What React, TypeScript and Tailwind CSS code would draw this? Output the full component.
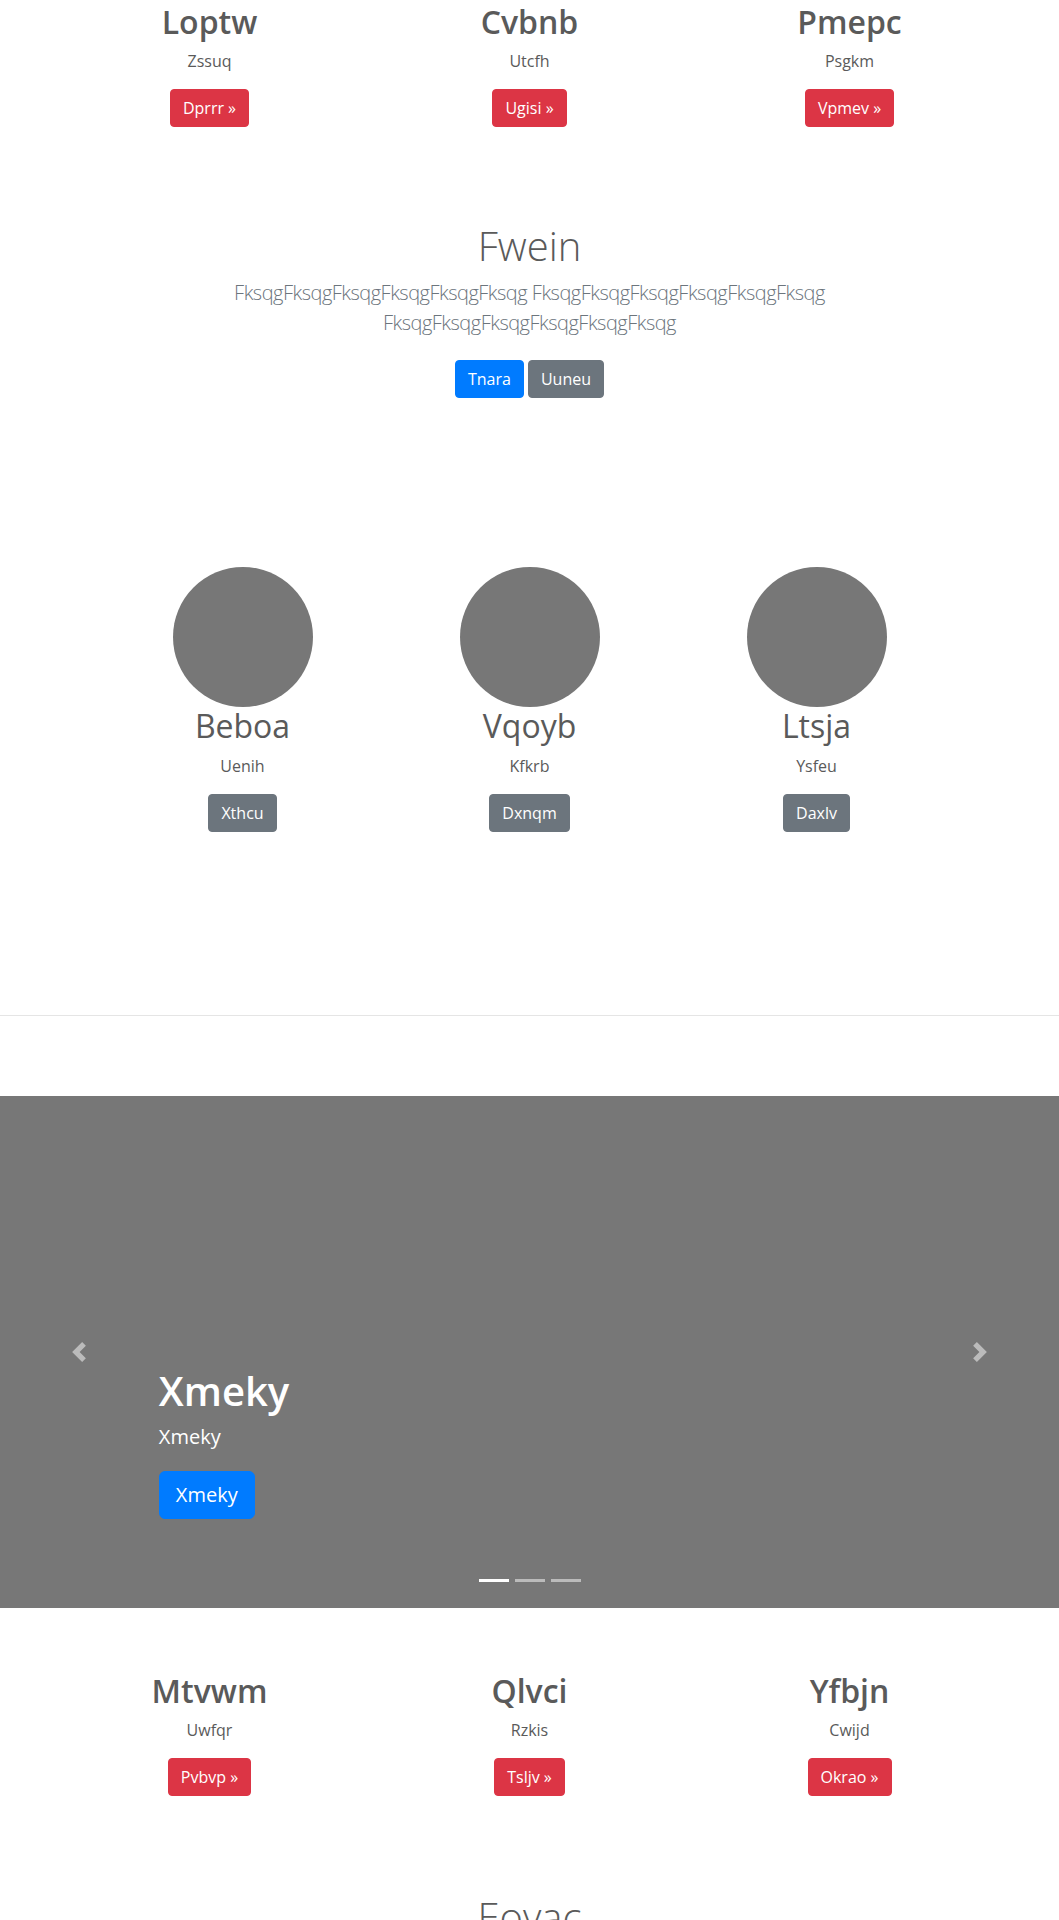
import React from "react";

const topCols = [
  { h: "Loptw", p: "Zssuq", b: "Dprrr »" },
  { h: "Cvbnb", p: "Utcfh", b: "Ugisi »" },
  { h: "Pmepc", p: "Psgkm", b: "Vpmev »" },
];
const bottomCols = [
  { h: "Mtvwm", p: "Uwfqr", b: "Pvbvp »" },
  { h: "Qlvci", p: "Rzkis", b: "Tsljv »" },
  { h: "Yfbjn", p: "Cwijd", b: "Okrao »" },
];
const circles = [
  { h: "Beboa", p: "Uenih", b: "Xthcu" },
  { h: "Vqoyb", p: "Kfkrb", b: "Dxnqm" },
  { h: "Ltsja", p: "Ysfeu", b: "Daxlv" },
];

function RedRow({ cols }: { cols: { h: string; p: string; b: string }[] }) {
  return (
    <div className="mx-auto grid w-[960px] grid-cols-3">
      {cols.map((c) => (
        <div key={c.h} className="flex flex-col items-center text-center">
          <h2 className="mb-2 text-[32px] font-semibold leading-[38.4px]">{c.h}</h2>
          <p className="mb-4 text-base leading-6">{c.p}</p>
          <a className="inline-block rounded border border-[#dc3545] bg-[#dc3545] px-3 py-[6px] text-base leading-6 text-white">
            {c.b}
          </a>
        </div>
      ))}
    </div>
  );
}

function Chevron({ dir }: { dir: "l" | "r" }) {
  return (
    <svg width="20" height="20" viewBox="0 0 8 8" fill="#ffffff" fillOpacity="0.5">
      {dir === "l" ? (
        <path d="M5.25 0l-4 4 4 4 1.5-1.5-2.5-2.5 2.5-2.5-1.5-1.5z" />
      ) : (
        <path d="M2.75 0l-1.5 1.5 2.5 2.5-2.5 2.5 1.5 1.5 4-4-4-4z" />
      )}
    </svg>
  );
}

export default function App() {
  const fks = "FksqgFksqgFksqgFksqgFksqgFksqg";
  return (
    <div className="min-h-[1920px] w-full overflow-hidden bg-white pt-[3px] font-['Open_Sans','Noto_Sans',sans-serif] text-[#5a5a5a]">
      <RedRow cols={topCols} />

      <section className="mt-[95px] text-center">
        <h1 className="mb-2 text-[40px] font-light leading-[48px]">Fwein</h1>
        <p className="mx-auto mb-4 w-[620px] text-xl font-light leading-[30px] tracking-[-0.5px] text-[#6c757d]">
          {fks} {fks} {fks}
        </p>
        <div className="mt-[22px] flex justify-center gap-1">
          <a className="inline-block rounded border border-[#007bff] bg-[#007bff] px-3 py-[6px] text-base leading-6 text-white">
            Tnara
          </a>
          <a className="inline-block rounded border border-[#6c757d] bg-[#6c757d] px-3 py-[6px] text-base leading-6 text-white">
            Uuneu
          </a>
        </div>
      </section>

      <div className="mx-auto mt-[169px] grid w-[861px] grid-cols-3">
        {circles.map((c) => (
          <div key={c.h} className="flex flex-col items-center text-center">
            <div className="h-[140px] w-[140px] rounded-full bg-[#777777]" />
            <h2 className="mb-2 text-[32px] font-normal leading-[38.4px]">{c.h}</h2>
            <p className="mb-4 text-base leading-6">{c.p}</p>
            <a className="inline-block rounded border border-[#6c757d] bg-[#6c757d] px-3 py-[6px] text-base leading-6 text-white">
              {c.b}
            </a>
          </div>
        ))}
      </div>

      <hr className="mt-[183px] border-0 border-t border-[#e5e5e5]" />

      <div className="relative mt-[80px] h-[512px] w-full bg-[#777777]">
        <div className="absolute left-0 top-0 flex h-full w-[15%] items-center justify-center">
          <Chevron dir="l" />
        </div>
        <div className="absolute right-0 top-0 flex h-full w-[15%] items-center justify-center">
          <Chevron dir="r" />
        </div>
        <div className="absolute left-[15%] top-[271px] text-left text-white">
          <h1 className="mb-2 text-[40px] font-semibold leading-[48px]">Xmeky</h1>
          <p className="text-xl leading-[28px]">Xmeky</p>
          <a className="mt-[20px] inline-block rounded-[6px] border border-[#007bff] bg-[#007bff] px-4 py-2 text-xl leading-[30px] text-white">
            Xmeky
          </a>
        </div>
        <div className="absolute left-1/2 top-[483px] flex -translate-x-1/2 gap-[6px]">
          <span className="block h-[3px] w-[30px] bg-white" />
          <span className="block h-[3px] w-[30px] bg-white/50" />
          <span className="block h-[3px] w-[30px] bg-white/50" />
        </div>
      </div>

      <div className="mt-16">
        <RedRow cols={bottomCols} />
      </div>

      <section className="mt-[97px] text-center">
        <h1 className="mb-2 text-[40px] font-light leading-[48px]">Eovac</h1>
      </section>
    </div>
  );
}
